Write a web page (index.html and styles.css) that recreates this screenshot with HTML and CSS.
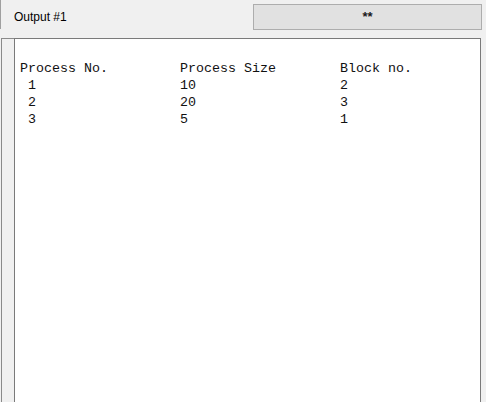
FILE: index.html
```html
<!DOCTYPE html>
<html>
<head>
<meta charset="utf-8">
<link rel="stylesheet" href="styles.css">
</head>
<body>
<div class="header">
  <div class="edge"></div>
  <div class="title">Output #1</div>
  <div class="btn">**</div>
</div>
<div class="main">
  <div class="strip"></div>
  <div class="output"><pre class="text">

Process No.         Process Size        Block no.
 1                  10                  2
 2                  20                  3
 3                  5                   1</pre></div>
</div>
</body>
</html>
```
FILE: styles.css
```css
html, body {
  margin: 0;
  padding: 0;
  width: 486px;
  height: 402px;
  overflow: hidden;
  background: #f0f0f0;
  font-family: "Segoe UI", "Liberation Sans", Arial, sans-serif;
}
.header {
  display: flex;
  height: 38px;
  align-items: flex-start;
}
.edge {
  width: 0;
  height: 29px;
  border-left: 1px solid #a0a0a0;
}
.title {
  margin-left: 13px;
  margin-top: 10px;
  font-size: 12px;
  line-height: 14px;
  color: #000;
  width: 239px;
}
.btn {
  margin-top: 4px;
  width: 227px;
  height: 24px;
  border: 1px solid #adadad;
  background: #e1e1e1;
  font-family: "Liberation Sans", Arial, sans-serif;
  font-size: 13px;
  font-weight: bold;
  line-height: 24px;
  text-align: center;
  color: #1a1a1a;
}
.main {
  display: flex;
  height: 380px;
}
.strip {
  width: 12px;
  margin-left: 1px;
  border-left: 1px solid #8a8a8a;
  border-top: 1px solid #8a8a8a;
  background: #f0f0f0;
}
.output {
  width: 467px;
  height: 380px;
  border: 1px solid #7a7a7a;
  background: #fff;
  padding: 4px 0 0 5px;
  box-sizing: border-box;
}
.text {
  margin: 0;
  font-family: "Liberation Mono", "Courier New", monospace;
  font-size: 13.333px;
  line-height: 17px;
  color: #111;
}
```
